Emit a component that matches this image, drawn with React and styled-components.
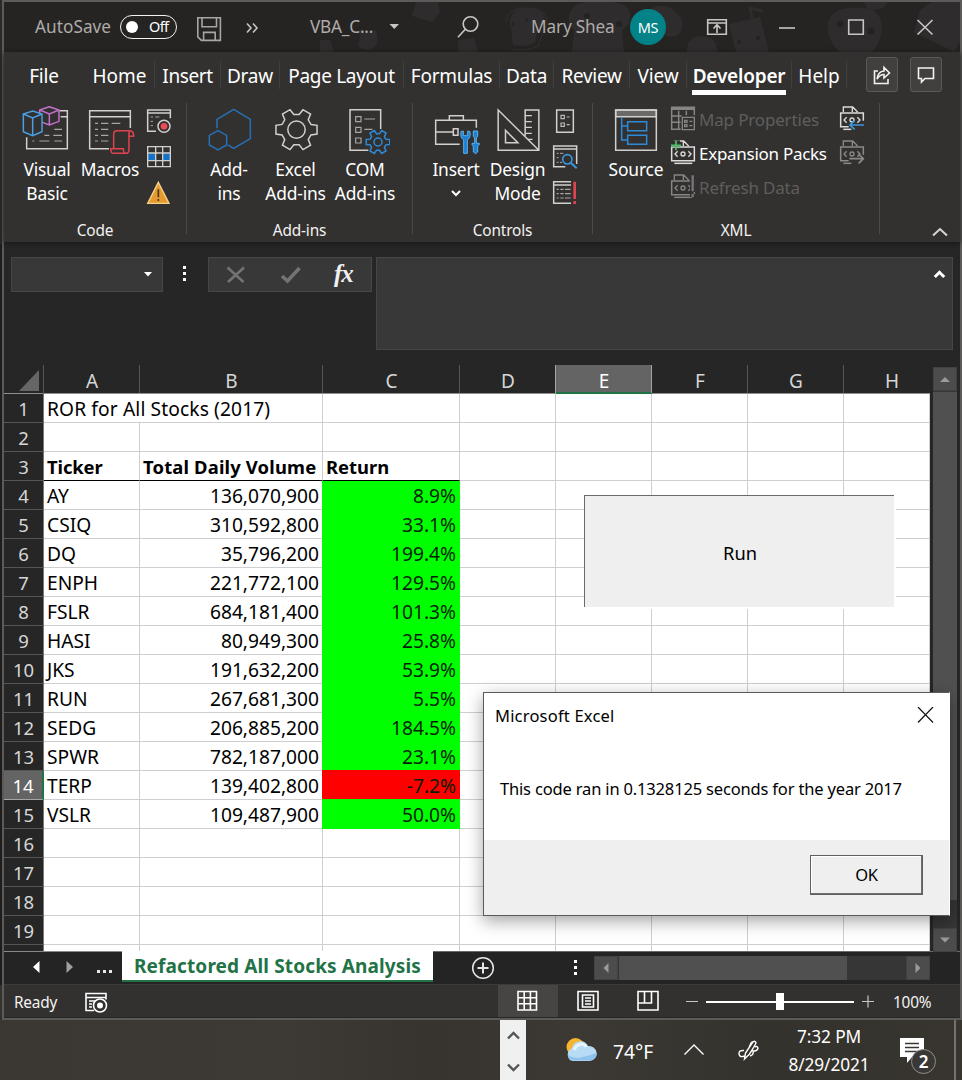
import React from 'react';
import styled, { createGlobalStyle, css } from 'styled-components';

const ui = `'Noto Sans', 'Open Sans', sans-serif`;

const Global = createGlobalStyle`
  * { box-sizing: border-box; }
  body { margin: 0; background: #3a3733; font-family: ${ui}; overflow: hidden; }
  svg { display: block; flex: none; }
`;

const Desktop = styled.div`
  width: 962px;
  height: 1080px;
  display: flex;
  flex-direction: column;
  background: #3a3733;
`;
const Upper = styled.div`
  display: flex;
  height: 1020px;
`;
const BackEdge = styled.div`
  width: 2px;
  background: linear-gradient(#2a2a2a 0 244px, #1d1d1d 244px 985px, #34322f 985px);
`;
const Window = styled.div`
  position: relative;
  width: 960px;
  height: 1020px;
  border: 2px solid #5c5b59;
  background: #262626;
  display: flex;
  flex-direction: column;
`;

/* ---------- icons ---------- */
const Drawing = styled.svg`
  fill: none;
  stroke: ${(p) => p.$c || '#d2d0ce'};
  stroke-width: ${(p) => p.$sw || 4.5};
`;
const Icon = ({ w, h, vb, c, sw, children }) => (
  <Drawing width={w} height={h} viewBox={vb} $c={c} $sw={sw}>{children}</Drawing>
);

const gear = (cx, cy, ro, ri, rot = 0) => {
  const pts = [];
  for (let i = 0; i < 6; i++) {
    const a = i * 60 + rot;
    [[-20, ri], [-12, ro], [12, ro], [20, ri]].forEach(([d, r]) => {
      const t = ((a + d) * Math.PI) / 180;
      pts.push(`${(cx + r * Math.cos(t)).toFixed(1)} ${(cy + r * Math.sin(t)).toFixed(1)}`);
    });
  }
  return `M${pts.join('L')}Z`;
};

const BG = '#323130';
const BLUE = '#2f8ad6';

const BigIcon = ({ x, children }) => <Icon w={50} h={49} vb={`${x} 33 150 147`}>{children}</Icon>;

const VbIcon = () => (
  <BigIcon x={66}>
    <path d="M178 47h24v114H80v-34M182 65h20" />
    <path d="M163 103h23M133 121h15M160 121h26M97 138h6M118 138h30M163 138h23" stroke="#a8a6a4" strokeWidth="3.5" />
    <path d="M148 35l29 10v34l-29 11-29-11V45zM119 45l29 12 29-12M148 57v33" stroke="#c46fc9" />
    <path d="M98 48l28 9v53l-28 12-28-12V57z" fill={BG} stroke="#4a9fe0" />
    <path d="M70 57l28 12 28-12M98 69v53" stroke="#4a9fe0" />
  </BigIcon>
);
const MacrosIcon = () => (
  <BigIcon x={255}>
    <path d="M327 161h-58V47h122v52M269 65h122" />
    <path d="M285 85h9M303 85h22M335 85h26M285 103h9M303 103h22M285 121h9M303 121h22M285 138h9M303 138h22" stroke="#a8a6a4" strokeWidth="3.5" />
    <path d="M341 160v-42q0-11 10-11h38q12 0 12 17h-14M387 124v-8q0-9 5-9M387 124v40q0 11-10 11h-36q-9 0-9-14h38q0 14 8 14" stroke="#e04350" />
  </BigIcon>
);
const AddinsIcon = () => (
  <BigIcon x={612}>
    <g stroke="#2870b4">
      <path d="M651 100V73l50-30 50 30v58l-50 29-17-10" />
      <path d="M654 107l26 14v29l-26 15-26-15v-29z" />
    </g>
  </BigIcon>
);
const GearIcon = () => (
  <BigIcon x={811.5}>
    <path d={gear(888, 104, 63, 46)} />
    <circle cx="888" cy="104" r="26" />
  </BigIcon>
);
const ComIcon = () => (
  <BigIcon x={60}>
    <path d="M145 166H90V44h92v58" />
    <g strokeWidth="3.5">
      <path d="M107 65h16v15h-16zM107 97h16v15h-16zM107 129h16v15h-16zM133 72h32M133 103h24" stroke="#a8a6a4" />
    </g>
    <path d={gear(174, 141, 36, 25)} stroke={BLUE} />
    <circle cx="174" cy="141" r="12" stroke={BLUE} />
  </BigIcon>
);
const ToolboxIcon = () => (
  <BigIcon x={333}>
    <path d="M388 74V62h42v12M419 148h-72V76h122v22M347 111h52M400 101h14v20h-14z" />
    <path d="M423 110q-3 18 8 24v41h11v-41q11-6 8-24l-7-2v14h-13v-14z" fill="#1f7fd0" stroke="#5cb0ee" strokeWidth="3" />
    <path d="M460 108h13v16l-4 5v16h9v4l-5 4v18l-6 5-7-5v-18l-4-4v-4h8v-16l-4-5z" fill="#1f7fd0" stroke="#5cb0ee" strokeWidth="3" />
  </BigIcon>
);
const DesignIcon = () => (
  <BigIcon x={517.5}>
    <path d="M614 122V45h41v121H533V45l122 121M555 106v37h37z" />
    <path d="M614 62h20M614 80h20M614 97h20M614 115h20M622 133h14" strokeWidth="3.5" />
  </BigIcon>
);
const SourceIcon = () => (
  <BigIcon x={873}>
    <path d="M887 45h122v20H887z" fill="#6a6967" />
    <path d="M887 45h122v121H887z" />
    <path d="M905 66v69h18M905 93h18M923 80h57v27h-57zM923 121h57v27h-57z" stroke={BLUE} />
  </BigIcon>
);

const SmallIcon = ({ x, y, children }) => <Icon w={28} h={30} vb={`${x} ${y} 84 90`}>{children}</Icon>;

const RecordIcon = () => (
  <SmallIcon x={435} y={30}>
    <path d="M468 109h-25V45h68v25M443 54h68" />
    <path d="M452 66h7M466 66h12M452 79h7M452 92h7" stroke="#a8a6a4" strokeWidth="3" />
    <circle cx="492" cy="94" r="18" />
    <circle cx="492" cy="94" r="10" fill="#ee4b55" stroke="none" />
  </SmallIcon>
);
const RelativeIcon = () => (
  <SmallIcon x={435} y={138}>
    <path d="M443 175h24v22h-24zM488 175h23v22h-23z" fill="#1272c8" stroke="none" />
    <path d="M443 155h68v60h-68zM443 174h68M443 197h68M467 155v60M488 155v60" strokeWidth="4" />
  </SmallIcon>
);
const WarningIcon = () => (
  <SmallIcon x={435} y={246}>
    <path d="M475 262l32 63h-64z" fill="#e49a2c" stroke="#f7d08a" strokeWidth="4" />
    <path d="M475 283v24M475 312v6" stroke="#4a3a20" strokeWidth="5" />
  </SmallIcon>
);
const PropsIcon = () => (
  <SmallIcon x={693} y={30}>
    <path d="M710 45h50v67h-50z" />
    <path d="M723 61h10v10h-10zM723 84h10v10h-10zM740 66h9M740 89h9" strokeWidth="3.5" stroke="#bbb" />
  </SmallIcon>
);
const CodeIcon = () => (
  <SmallIcon x={693} y={138}>
    <path d="M736 215h-35v-62h69v54M701 162h69" />
    <path d="M710 175h6M720 175h10M710 188h6M710 202h6M720 202h6" stroke="#a8a6a4" strokeWidth="3" />
    <circle cx="742" cy="193" r="14" stroke="#3d97dd" strokeWidth="5" />
    <path d="M752 203l18 17" stroke="#3d97dd" strokeWidth="6" />
  </SmallIcon>
);
const RunDialogIcon = () => (
  <SmallIcon x={693} y={246}>
    <path d="M753 260h-52v65h52M701 270h52" />
    <path d="M710 283h6M721 283h10M735 283h17M710 296h6M721 296h10M735 296h17M710 309h6M721 309h10M735 309h17" stroke="#a8a6a4" strokeWidth="3.5" />
    <path d="M764 260v52M764 318v9" stroke="#e04350" strokeWidth="8" />
  </SmallIcon>
);

const XmlPage = ({ x, y, full = true }) => (
  <g transform={`translate(${x} ${y})`}>
    <path d="M10 18V3h28l15 15M37 3v15" strokeWidth="4" />
    <path d={full ? 'M2 21h68v41H2z' : 'M70 44V21H2v41h24'} />
    <path d="M20 34l-8 8 8 8M52 34l8 8-8 8" strokeWidth="4" />
    <circle cx="36" cy="42" r="6" strokeWidth="4" />
    <path d={full ? 'M10 70h54' : 'M10 70h24'} />
  </g>
);
const RowIcon = ({ x, y, c, children }) => <Icon w={26} h={28} vb={`${x} ${y} 78 84`} c={c}>{children}</Icon>;

const MapIcon = () => (
  <RowIcon x={90} y={30} c="#868583">
    <path d="M93 36h72v9H93z" fill="#868583" stroke="none" />
    <path d="M122 103H95V37h68v24M95 63h30M95 82h27M116 47v56M139 47v14" />
    <path d="M127 67h36v37h-36zM134 76h7v6h-7zM134 89h7v6h-7zM148 79h9M148 92h9" strokeWidth="4" />
  </RowIcon>
);
const PacksIcon = () => (
  <RowIcon x={90} y={132} c="#dedcda">
    <XmlPage x={93} y={135} />
    <path d="M92 136h28v18H92z" fill={BG} stroke="none" />
    <path d="M108 137v29M93 151h30" stroke="#4cc46a" strokeWidth="5" />
  </RowIcon>
);
const RefreshIcon = () => (
  <RowIcon x={90} y={234} c="#868583">
    <XmlPage x={93} y={237} />
    <path d="M158 236v56M158 297v10" stroke={BG} strokeWidth="16" />
    <path d="M158 241v48M158 297v9" stroke="#777" strokeWidth="7" />
  </RowIcon>
);
const ImportIcon = () => (
  <RowIcon x={597} y={30} c="#dedcda">
    <XmlPage x={600} y={33} full={false} />
    <path d="M672 90h-40M644 77l-14 13 14 13" stroke="#3d97dd" strokeWidth="5" />
  </RowIcon>
);
const ExportIcon = () => (
  <RowIcon x={597} y={132} c="#8a8987">
    <XmlPage x={600} y={135} full={false} />
    <path d="M628 191h40M656 177l14 14-14 14" strokeWidth="5" />
  </RowIcon>
);

/* ---------- title bar ---------- */
const TitleBar = styled.div`
  position: relative;
  isolation: isolate;
  height: 50px;
  flex: none;
  background: #252423;
  display: grid;
  grid-template-columns: 31px 85px 75px 50px 65px 77px 68px 76px 99px 75px 72px 69px 69px 45px;
  align-items: center;
`;
const Doodles = styled.svg`
  position: absolute;
  left: 0;
  top: 0;
  z-index: -1;
  fill: #2e2c2d;
  stroke: none;
`;
const TitleText = styled.span`
  font-size: 17.2px;
  line-height: 50px;
  color: #aeaba8;
  white-space: nowrap;
  letter-spacing: ${(p) => p.$ls || 0}px;
`;
const Toggle = styled.span`
  width: 57px;
  height: 24px;
  border: 1.5px solid #f3f2f1;
  border-radius: 12px;
  display: flex;
  align-items: center;
  gap: 11px;
  padding: 0 0 2px 5px;
  font-size: 14.5px;
  letter-spacing: -0.6px;
  color: #fff;
  &::before {
    content: '';
    width: 12px;
    height: 12px;
    margin-top: 1px;
    border-radius: 50%;
    background: #fff;
  }
`;
const Avatar = styled.span`
  width: 36px;
  height: 36px;
  border-radius: 50%;
  background: #038387;
  color: #fff;
  font-size: 14.5px;
  letter-spacing: -0.3px;
  display: flex;
  align-items: center;
  justify-content: center;
`;
const TitleIcon = ({ x, w, children, c = '#c8c6c4' }) => (
  <Icon w={w} h={50} vb={`${x} 2 ${w} 50`} c={c} sw={1.6}>{children}</Icon>
);

const Title = () => (
  <TitleBar>
    <Doodles width="956" height="50" viewBox="4 2 956 50">
      <path d="M416 2h22l2 10-8 10-20-6zM360 36q-4-8 6-6l2 2 8-2q4 14-2 18-10 4-16-2zM458 40l16-2 4 14h-20zM320 40h10l4 12h-14z" />
      <path d="M516 10q22-6 27 4 4 12-5 16l-3 12q-10 6-22 3l-2-18q-4-8 5-17z" />
      <path d="M506 22q2-15 22-14 20 0 19 17l-5 10-4 11q-14 6-27 3" fill="none" stroke="#2e2c2d" strokeWidth="1.5" />
      <path d="M570 12q4-12 28-10 28-2 32 10 2 12-8 18l2 22h-52l2-22q-8-8-4-18zM652 8q18-8 30 12 2 12-6 16-14 4-20-12zM729 24l31-7 9 35h-33z" />
      <path d="M688 44q3-8 14-8 14 0 16 16h-32zM828 22q6-16 28-14 24-2 26 18 0 16-10 26h-32q-14-12-12-30zM864 2h24q-4 8-16 8-6-2-8-8zM920 10l12-8h28v40l-6 10-40-20z" />
      <path d="M752 18l-2-10 13 3" stroke="#2e2c2d" strokeWidth="3" fill="none" />
      <g fill="#242223">
        <circle cx="840" cy="24" r="3.5" /><circle cx="871" cy="31" r="3.5" /><circle cx="587" cy="16" r="3" /><circle cx="619" cy="24" r="3" /><circle cx="739" cy="42" r="2" /><circle cx="758" cy="38" r="2" /><circle cx="513" cy="24" r="1.5" /><circle cx="527" cy="20" r="1.5" />
      </g>
    </Doodles>
    <span />
    <TitleText $ls={0.05}>AutoSave</TitleText>
    <Toggle>Off</Toggle>
    <TitleIcon x={195} w={30} c="#a8a6a3">
      <path d="M197.8 17.8h22.6v22.6h-19l-3.6-3.6zM202 18v8.7h14.5V18M203.6 40.4v-8h11.6v8" />
    </TitleIcon>
    <TitleIcon x={245} w={20}><path d="M247 23.5l4 4.5-4 4.5M253 23.5l4 4.5-4 4.5" /></TitleIcon>
    <TitleText $ls={-0.2}>VBA_C...</TitleText>
    <TitleIcon x={387} w={16}><path d="M389.5 24h9.5l-4.7 5z" fill="#c8c6c4" stroke="none" /></TitleIcon>
    <TitleIcon x={455} w={28}><circle cx="470.500" cy="24" r="7.3" /><path d="M465.3 29.2L458 37.2" /></TitleIcon>
    <TitleText $ls={-0.15}>Mary Shea</TitleText>
    <Avatar>MS</Avatar>
    <TitleIcon x={705} w={26}><path d="M707.7 19.7h18.6v14.6h-18.6zM707.7 23h18.6M717 33v-8M713.5 28.5l3.5-3.8 3.5 3.8" /></TitleIcon>
    <TitleIcon x={777} w={22}><path d="M779 28h16" /></TitleIcon>
    <TitleIcon x={846} w={22}><path d="M848.7 20h14.6v14.3h-14.6z" /></TitleIcon>
    <TitleIcon x={915} w={22}><path d="M917.5 20l15 14.5M932.5 20l-15 14.5" /></TitleIcon>
  </TitleBar>
);

/* ---------- ribbon ---------- */
const Ribbon = styled.div`
  height: 190px;
  flex: none;
  background: ${BG};
  box-shadow: 0 1px 5px #161616;
  position: relative;
`;
const Tabs = styled.div`
  display: flex;
  height: 49px;
`;
const Tab = styled.div`
  width: ${(p) => p.$w}px;
  height: 28px;
  margin-top: 9px;
  border-right: 1px solid ${(p) => (p.$plain ? 'transparent' : '#403f3e')};
  color: #fff;
  font-size: 19px;
  line-height: 31px;
  letter-spacing: ${(p) => p.$ls || 0}px;
  text-align: center;
  white-space: nowrap;
  ${(p) => p.$active && css`
    font-weight: 600;
    &::after {
      content: '';
      display: block;
      height: 5px;
      margin: -2px 5px 0 5px;
      background: #fff;
    }
  `}
`;
const TabButton = styled.span`
  width: 32px;
  height: 35px;
  margin: 5px 0 0 ${(p) => p.$ml}px;
  border: 1px solid #5a5958;
  border-radius: 3px;
  background: #41403f;
  display: flex;
  align-items: center;
  justify-content: center;
`;
const Groups = styled.div`
  display: flex;
  height: 138px;
  padding-top: 2px;
`;
const Group = styled.div`
  width: ${(p) => p.$w}px;
  height: 131px;
  border-right: 1px solid #4a4948;
  display: flex;
  flex-direction: column;
`;
const GroupBody = styled.div`
  height: 118px;
  padding-left: ${(p) => p.$pl}px;
  padding-top: 3px;
  display: flex;
`;
const GroupLabel = styled.div`
  color: #f3f2f1;
  font-size: 15.4px;
  line-height: 20px;
  height: 13px;
  letter-spacing: -0.15px;
  text-align: center;
`;
const BigButton = styled.div`
  width: ${(p) => p.$w}px;
  display: flex;
  flex-direction: column;
  align-items: center;
  color: #fff;
  font-size: 17.4px;
  line-height: 24px;
  letter-spacing: -0.17px;
  text-align: center;
  white-space: nowrap;
  & > span { margin-top: 2px; }
`;
const SmallColumn = styled.div`
  display: flex;
  flex-direction: column;
  gap: 6px;
  margin-top: -1px;
  margin-left: ${(p) => p.$ml || 0}px;
`;
const XmlList = styled.div`
  display: flex;
  flex-direction: column;
  gap: 6px;
  width: 169px;
  margin-left: 7px;
  margin-top: -1px;
`;
const XmlItem = styled.div`
  display: flex;
  align-items: center;
  gap: 3px;
  height: 28px;
  font-size: 17px;
  letter-spacing: ${(p) => (p.$off ? -0.17 : -0.28)}px;
  white-space: nowrap;
  color: ${(p) => (p.$off ? '#5f5e5d' : '#fff')};
`;
const Collapse = styled.div`
  margin: 124px 0 0 51px;
`;

const tabs = [
  ['File', 81, true, -0.2], ['Home', 70, false, 0], ['Insert', 66, false, -0.4], ['Draw', 59, false, -0.2],
  ['Page Layout', 124, false, -0.3], ['Formulas', 96, false, -0.25], ['Data', 54, false, -0.2],
  ['Review', 76, false, -0.3], ['View', 57, false, -0.2],
];

const RibbonBar = () => (
  <Ribbon>
    <Tabs>
      {tabs.map(([t, w, plain, ls]) => <Tab key={t} $w={w} $plain={plain} $ls={ls}>{t}</Tab>)}
      <Tab $w={105} $active $ls={-0.2}>Developer</Tab>
      <Tab $w={55}>Help</Tab>
      <TabButton $ml={19}>
        <Icon w={20} h={20} vb="0 0 20 20" sw={1.6} c="#f3f2f1">
          <path d="M6 6H2.500v12.500H16V14M5 14q1-7.500 7-8V2.500L17.500 8 12 13V9.500q-4 0-7 4.500z" />
        </Icon>
      </TabButton>
      <TabButton $ml={12}>
        <Icon w={20} h={20} vb="0 0 20 20" sw={1.6} c="#f3f2f1">
          <path d="M2.500 3h15v10.500H9L5.500 17v-3.500h-3z" />
        </Icon>
      </TabButton>
    </Tabs>
    <Groups>
      <Group $w={183}>
        <GroupBody $pl={15}>
          <BigButton $w={56}><VbIcon /><span>Visual<br />Basic</span></BigButton>
          <BigButton $w={70}><MacrosIcon /><span>Macros</span></BigButton>
          <SmallColumn><RecordIcon /><RelativeIcon /><WarningIcon /></SmallColumn>
        </GroupBody>
        <GroupLabel>Code</GroupLabel>
      </Group>
      <Group $w={226}>
        <GroupBody $pl={12}>
          <BigButton $w={60}><AddinsIcon /><span>Add-<br />ins</span></BigButton>
          <BigButton $w={73}><GearIcon /><span>Excel<br />Add-ins</span></BigButton>
          <BigButton $w={66}><ComIcon /><span>COM<br />Add-ins</span></BigButton>
        </GroupBody>
        <GroupLabel>Add-ins</GroupLabel>
      </Group>
      <Group $w={180}>
        <GroupBody $pl={12}>
          <BigButton $w={62}>
            <ToolboxIcon /><span>Insert</span>
            <Icon w={12} h={24} vb="0 -1 12 24" sw={2} c="#fff"><path d="M2 9l4 4 4-4" /></Icon>
          </BigButton>
          <BigButton $w={61}><DesignIcon /><span>Design<br />Mode</span></BigButton>
          <SmallColumn $ml={3}><PropsIcon /><CodeIcon /><RunDialogIcon /></SmallColumn>
        </GroupBody>
        <GroupLabel>Controls</GroupLabel>
      </Group>
      <Group $w={287}>
        <GroupBody $pl={16}>
          <BigButton $w={54}><SourceIcon /><span>Source</span></BigButton>
          <XmlList>
            <XmlItem $off><MapIcon />Map Properties</XmlItem>
            <XmlItem><PacksIcon />Expansion Packs</XmlItem>
            <XmlItem $off><RefreshIcon />Refresh Data</XmlItem>
          </XmlList>
          <SmallColumn><ImportIcon /><ExportIcon /></SmallColumn>
        </GroupBody>
        <GroupLabel>XML</GroupLabel>
      </Group>
      <Collapse><Icon w={18} h={10} vb="0 0 18 10" sw={2} c="#d8d6d4"><path d="M2 8.500l7-6.500 7 6.500" /></Icon></Collapse>
    </Groups>
  </Ribbon>
);

/* ---------- formula bar ---------- */
const FormulaRow = styled.div`
  height: 123px;
  flex: none;
  padding: 15px 7px 0 7px;
  display: flex;
  align-items: flex-start;
`;
const Field = styled.div`
  width: ${(p) => p.$w}px;
  height: ${(p) => p.$h}px;
  margin-left: ${(p) => p.$ml || 0}px;
  background: #383838;
  border: 1px solid #464646;
  display: flex;
  justify-content: flex-end;
  align-items: flex-start;
`;
const FxField = styled(Field)`
  justify-content: flex-start;
`;
const Dots = styled.div`
  width: 45px;
  height: 35px;
  display: flex;
  flex-direction: column;
  align-items: center;
  justify-content: center;
  gap: 3px;
  padding: 0 3px 2px 0;
  & > i { width: 3px; height: 3px; background: #fff; }
`;
const Fx = styled.span`
  font: italic bold 25px/32px 'Liberation Serif', serif;
  letter-spacing: -1px;
  color: #f0f0f0;
  margin-left: 30px;
`;

const Formula = () => (
  <FormulaRow>
    <Field $w={152} $h={35}>
      <Icon w={22} h={33} vb="-1 0 22 33"><path d="M3 14h8l-4 4.500z" fill="#fff" stroke="none" /></Icon>
    </Field>
    <Dots><i /><i /><i /></Dots>
    <FxField $w={164} $h={35}>
      <Icon w={95} h={33} vb="0 0 95 33" c="#737373" sw={2.6}>
        <path d="M18.500 9.500l16 14.500M35 9.500l-16 14.500" />
        <path d="M73 18l5.500 5 12-13" strokeWidth="3.6" />
      </Icon>
      <Fx>fx</Fx>
    </FxField>
    <Field $w={577} $h={93} $ml={4}>
      <Icon w={20} h={33} vb="-1 0 20 33" c="#fff" sw={3}><path d="M1.800 19l4.700-4.700 4.700 4.700" /></Icon>
    </Field>
  </FormulaRow>
);

/* ---------- sheet ---------- */
const SheetArea = styled.div`
  position: relative;
  display: flex;
  height: 586px;
  flex: none;
`;
const Grid = styled.div`
  width: 926px;
  height: 586px;
  overflow: hidden;
`;
const columns = '40px 96px 183px 137px 96px 96px 96px 96px 86px';
const HeaderRow = styled.div`
  display: grid;
  grid-template-columns: ${columns};
  height: 29px;
  border-bottom: 1px solid #8f8f8f;
`;
const ColHead = styled.div`
  height: ${(p) => (p.$on ? 29 : 28)}px;
  border-right: 1px solid ${(p) => (p.$on ? '#a5a5a5' : '#555')};
  color: ${(p) => (p.$on ? '#fff' : '#d6d6d6')};
  font-size: 19px;
  line-height: 32px;
  text-align: center;
  padding-left: 1px;
  ${(p) => p.$on && css`
    background: #646464;
    border-bottom: 2px solid #217346;
    box-shadow: -1px 0 #a5a5a5;
  `}
  &:last-child { padding-left: 10px; border-right: 0; }
`;
const Corner = styled.div`
  display: flex;
  justify-content: flex-end;
  padding: 5px 3px 0 0;
  border-right: 1px solid #555;
`;
const Row = styled.div`
  display: grid;
  grid-template-columns: ${columns};
  grid-template-rows: 29px;
  height: 29px;
`;
const RowHead = styled.div`
  background: ${(p) => (p.$on ? '#646464' : '#262626')};
  color: ${(p) => (p.$on ? '#fff' : '#d6d6d6')};
  border-right: ${(p) => (p.$on ? '2px solid #217346' : '1px solid #777')};
  border-bottom: 1px solid ${(p) => (p.$on ? '#a5a5a5' : '#555')};
  font-size: 18.5px;
  line-height: 30px;
  text-align: center;
`;
const Cell = styled.div`
  grid-column: span ${(p) => p.$span || 1};
  background: #fff;
  color: #000;
  border-right: 1px solid #cfcfcf;
  border-bottom: 1px solid ${(p) => (p.$rule ? '#000' : '#cfcfcf')};
  font-size: ${(p) => (p.$bold ? 18.4 : 19.2)}px;
  line-height: 29px;
  font-weight: ${(p) => (p.$bold ? 700 : 400)};
  text-align: ${(p) => (p.$right ? 'right' : 'left')};
  letter-spacing: ${(p) => p.$ls || 0}px;
  padding: 0 3px;
  white-space: nowrap;
`;
const Filled = styled(Cell)`
  background: ${(p) => p.$fill};
  border-color: ${(p) => p.$fill};
  color: #041f04;
  margin: ${(p) => (p.$first ? 0 : -1)}px 0 0 -1px;
  line-height: ${(p) => (p.$first ? 29 : 31)}px;
  z-index: 1;
`;

const data = [
  ['AY', '136,070,900', '8.9%'], ['CSIQ', '310,592,800', '33.1%'], ['DQ', '35,796,200', '199.4%'],
  ['ENPH', '221,772,100', '129.5%'], ['FSLR', '684,181,400', '101.3%'], ['HASI', '80,949,300', '25.8%'],
  ['JKS', '191,632,200', '53.9%'], ['RUN', '267,681,300', '5.5%'], ['SEDG', '206,885,200', '184.5%'],
  ['SPWR', '782,187,000', '23.1%'], ['TERP', '139,402,800', '-7.2%'], ['VSLR', '109,487,900', '50.0%'],
];
const Blanks = ({ n }) => Array.from({ length: n }, (_, i) => <Cell key={i} />);

const RunButton = styled.button`
  position: absolute;
  left: 580px;
  top: 130px;
  width: 312px;
  height: 114px;
  padding: 2px 0 0 2px;
  background: #efefef;
  border: 0 solid #fff;
  border-width: 0 2px 2px 0;
  box-shadow: inset 1px 1px #6b6b6b;
  font: 18.3px ${ui};
  color: #000;
`;
const VScroll = styled.div`
  width: 24px;
  margin-left: 3px;
  height: 587px;
  display: flex;
  flex-direction: column;
  padding-top: 2px;
`;
const ScrollButton = styled.div`
  width: 24px;
  height: 24px;
  flex: none;
  background: #4c4c4c;
  border: 1px solid #424242;
  display: flex;
  align-items: center;
  justify-content: center;
`;
const VTrack = styled.div`
  flex: 1;
  background: #363636;
  padding-top: 1px;
`;
const VThumb = styled.div`
  height: 508px;
  background: #505050;
`;
const Tri = ({ d }) => <Icon w={12} h={12} vb="0 0 12 12"><path d={d} fill="#9a9a9a" stroke="none" /></Icon>;

const Sheet = () => (
  <SheetArea>
    <Grid>
      <HeaderRow>
        <Corner><Icon w={22} h={22} vb="0 0 22 22"><path d="M21 0v21H1z" fill="#666" stroke="none" /></Icon></Corner>
        {'ABCDEFGH'.split('').map((c) => <ColHead key={c} $on={c === 'E'}>{c}</ColHead>)}
      </HeaderRow>
      <Row>
        <RowHead>1</RowHead>
        <Cell $span={2} $ls={0.12}>ROR for All Stocks (2017)</Cell>
        <Blanks n={6} />
      </Row>
      <Row><RowHead>2</RowHead><Blanks n={8} /></Row>
      <Row>
        <RowHead>3</RowHead>
        <Cell $bold $rule $ls={-0.1}>Ticker</Cell>
        <Cell $bold $rule $ls={0.17}>Total Daily Volume</Cell>
        <Cell $bold $rule>Return</Cell>
        <Blanks n={5} />
      </Row>
      {data.map(([t, v, r], i) => (
        <Row key={t}>
          <RowHead $on={i === 10}>{i + 4}</RowHead>
          <Cell>{t}</Cell>
          <Cell $right>{v}</Cell>
          <Filled $right $first={i === 0} $fill={r[0] === '-' ? '#ff0000' : '#00ff00'}>{r}</Filled>
          <Blanks n={5} />
        </Row>
      ))}
      {[16, 17, 18, 19, ''].map((n) => <Row key={n}><RowHead>{n}</RowHead><Blanks n={8} /></Row>)}
    </Grid>
    <VScroll>
      <ScrollButton><Tri d="M1 9h10L6 4z" /></ScrollButton>
      <VTrack><VThumb /></VTrack>
      <ScrollButton><Tri d="M1 3.500h10l-5 5z" /></ScrollButton>
    </VScroll>
    <RunButton>Run</RunButton>
  </SheetArea>
);

/* ---------- sheet tabs and status ---------- */
const SheetTabs = styled.div`
  height: 34px;
  flex: none;
  display: flex;
  background: #242424;
  border-bottom: 1px solid #3a3a3a;
`;
const Nav = styled.div`
  width: 118px;
  border-top: 1px solid #8a8a8a;
`;
const SheetTab = styled.div`
  width: 311px;
  height: 31px;
  background: #fff;
  border-bottom: 2px solid #217346;
  color: #217346;
  font-weight: 700;
  font-size: 19px;
  line-height: 31px;
  letter-spacing: 0.13px;
  text-align: center;
  white-space: nowrap;
`;
const TabsRest = styled.div`
  flex: 1;
  display: flex;
  border-top: 1px solid #6a6a6a;
`;
const HScroll = styled.div`
  display: flex;
  width: 336px;
  height: 24px;
  margin-top: 4px;
  background: #363636;
  gap: 1px;
`;
const HThumb = styled.div`
  width: 228px;
  background: #505050;
  margin-right: auto;
`;
const Status = styled.div`
  height: 32px;
  flex: none;
  background: ${BG};
  display: grid;
  grid-template-columns: 10px 70px 414px 60px 60px 60px 215px 1fr;
  align-items: center;
  color: #f3f2f1;
  font-size: 15.4px;
  letter-spacing: -0.2px;
  & > span { padding-top: 3px; }
`;
const ViewButton = styled.div`
  height: 32px;
  background: ${(p) => (p.$on ? '#464544' : 'transparent')};
  display: flex;
  justify-content: center;
`;

const Bottom = () => (
  <>
    <SheetTabs>
      <Nav>
        <Icon w={118} h={32} vb="4 952 118 32">
          <path d="M39.500 961v12l-6.500-6z" fill="#fff" stroke="none" />
          <path d="M66.500 961v12l6.500-6z" fill="#a0a0a0" stroke="none" />
          <path d="M97 970h3v3h-3zM103 970h3v3h-3zM109 970h3v3h-3z" fill="#e8e8e8" stroke="none" />
        </Icon>
      </Nav>
      <SheetTab>Refactored All Stocks Analysis</SheetTab>
      <TabsRest>
        <Icon w={161} h={32} vb="433 952 161 32" c="#e8e8e8" sw={1.5}>
          <circle cx="483" cy="968" r="10.300" />
          <path d="M483 962.500v11M477.500 968h11" strokeWidth="2" />
          <path d="M574 960h3v3h-3zM574 966h3v3h-3zM574 972h3v3h-3z" fill="#fff" stroke="none" />
        </Icon>
        <HScroll>
          <ScrollButton><Tri d="M8.500 1v10l-5-5z" /></ScrollButton>
          <HThumb />
          <ScrollButton><Tri d="M3.500 1v10l5-5z" /></ScrollButton>
        </HScroll>
      </TabsRest>
    </SheetTabs>
    <Status>
      <span />
      <span>Ready</span>
      <Icon w={26} h={32} vb="84 985 26 32" c="#fff" sw={1.6}>
        <path d="M94 1010.500h-8V993.500h20v6M86 997.500h20M89 1001h6M89 1004h3M89 1007h3" />
        <circle cx="100" cy="1005.500" r="6.500" />
        <circle cx="100" cy="1005.500" r="3" fill="#fff" stroke="none" />
      </Icon>
      <ViewButton $on>
        <Icon w={22} h={32} vb="517 985.500 22 32" c="#fff" sw={1.6}>
          <path d="M518 992h18.500v18.500H518zM518 998.200h18.500M518 1004.300h18.500M524.200 992v18.500M530.400 992v18.500" />
        </Icon>
      </ViewButton>
      <ViewButton>
        <Icon w={22} h={32} vb="577 985.500 22 32" c="#fff" sw={1.6}>
          <path d="M578 992h20v18.500h-20zM582.500 995.500h11v12h-11zM585 998.500h6M585 1001.500h6M585 1004.500h6" />
        </Icon>
      </ViewButton>
      <ViewButton>
        <Icon w={22} h={32} vb="637 985.500 22 32" c="#fff" sw={1.6}>
          <path d="M638 992h20v18.500h-20zM638 1003.500h13.500V992M644.500 992v11.500" />
        </Icon>
      </ViewButton>
      <Icon w={205} h={32} vb="678 985.500 205 32" c="#fff" sw={1.2}>
        <path d="M686 1002h12M862 1002h12M868 996v12" stroke="#c8c6c4" />
        <path d="M706 1002.500h148" strokeWidth="2" />
        <path d="M776 993.500h8v17h-8z" fill="#fff" stroke="none" />
      </Icon>
      <span>100%</span>
    </Status>
  </>
);

/* ---------- message box ---------- */
const Dialog = styled.div`
  position: absolute;
  left: 479px;
  top: 690px;
  width: 467px;
  height: 224px;
  background: #fff;
  border: 1px solid #5a5a5a;
  border-right-color: #fff;
  box-shadow: 0 5px 16px rgba(0, 0, 0, 0.36);
  color: #000;
  font-size: 16.5px;
  display: flex;
  flex-direction: column;
  z-index: 3;
`;
const DialogTitle = styled.div`
  height: 44px;
  padding: 0 15px 0 11px;
  display: flex;
  justify-content: space-between;
  align-items: center;
  letter-spacing: 0.2px;
`;
const Message = styled.div`
  flex: 1;
  padding: 40px 0 0 16px;
  line-height: 24px;
  letter-spacing: -0.17px;
  white-space: nowrap;
`;
const DialogFooter = styled.div`
  height: 75px;
  background: #efefef;
  padding: 15px 26px 0 0;
  display: flex;
  justify-content: flex-end;
`;
const OkButton = styled.button`
  width: 113px;
  height: 40px;
  padding: 0 0 2px;
  background: #efefef;
  border: 1px solid #5f5f5f;
  box-shadow: inset -1px -1px #6e6e6e, inset 1px 1px #fff;
  font: 16.5px ${ui};
  letter-spacing: -0.4px;
  color: #000;
`;

const MessageBox = () => (
  <Dialog>
    <DialogTitle>
      <span>Microsoft Excel</span>
      <Icon w={17} h={17} vb="0 0 17 17" c="#111" sw={1.2}><path d="M1 0l15 15.500M16 0L1 15.500" /></Icon>
    </DialogTitle>
    <Message>This code ran in 0.1328125 seconds for the year 2017</Message>
    <DialogFooter><OkButton>OK</OkButton></DialogFooter>
  </Dialog>
);

/* ---------- taskbar ---------- */
const Taskbar = styled.div`
  height: 60px;
  display: grid;
  grid-template-columns: 500px 26px 38px 49px 69px 49px 52px 92px 24px 55px 1fr;
  align-items: center;
  color: #fff;
  background: linear-gradient(90deg, #3b3732, #3d3a36 30%, #37342e 45%, #3c3935 60%, #34322d 80%, #38352f);
`;
const PeekScroll = styled.div`
  height: 60px;
  background: #f0f0f0;
`;
const Temp = styled.span`
  font-size: 19.2px;
  padding-top: 2px;
`;
const Clock = styled.div`
  font-size: 17.3px;
  line-height: 28px;
  padding-top: 1px;
  letter-spacing: -0.1px;
  text-align: center;
`;
const Notifications = styled.div`
  position: relative;
  height: 60px;
`;
const Count = styled.span`
  position: absolute;
  left: 12px;
  top: 29px;
  width: 25px;
  height: 25px;
  border: 1.5px solid #8f8d89;
  border-radius: 50%;
  background: #3a3835;
  font-size: 17px;
  font-weight: 600;
  line-height: 23px;
  text-align: center;
`;
const Peek = styled.div`
  height: 60px;
  border-left: 2px solid #76736e;
`;

const Tray = () => (
  <Taskbar>
    <span />
    <PeekScroll>
      <Icon w={26} h={60} vb="500 1020 26 60" c="#555" sw={2.4}>
        <path d="M508 1038.500l5.500-5.500 5.500 5.500M508 1064.500l5.500 5.500 5.500-5.500" />
      </Icon>
    </PeekScroll>
    <span />
    <Icon w={36} h={60} vb="564 1020 36 60">
      <circle cx="575.500" cy="1047" r="9" fill="#f5b52e" stroke="none" />
      <path d="M573 1061a6.500 6.500 0 0 1-1-12.500 8.500 8.500 0 0 1 16-2.500 7.500 7.500 0 0 1 2 15z" fill="#b9dcf6" stroke="none" />
      <path d="M574 1060.500q-6-1-6-6 5 4 12 3t17-5q0 7-7 8z" fill="#8fc3ee" stroke="none" />
      <path d="M574 1050q2-5 7-6 4 0 5 3" stroke="#e6f4fd" strokeWidth="3" />
    </Icon>
    <Temp>74°F</Temp>
    <Icon w={24} h={60} vb="682 1020 24 60" c="#fff" sw={1.4}><path d="M684.500 1054.500l9.500-9.500 9.500 9.500" /></Icon>
    <Icon w={30} h={60} vb="731 1020 30 60" c="#fff" sw={1.4}>
      <path d="M744.500 1059l1-6 7-10.500q2-2.500 3.500 0 0 1.500-6.500 11.500zM749 1047.500l2-4.500q1.500-2 3-1M744 1050.500q-5.500-.5-5 3.500 .8 4 5.500 2M750 1056q4-1 3-5 4 .5 5-2.500-.500-3-3-1.500" />
    </Icon>
    <Clock>7:32 PM<br />8/29/2021</Clock>
    <span />
    <Notifications>
      <Icon w={44} h={60} vb="899 1020 44 60">
        <path d="M900 1038h24v19h-12l-5 6v-6h-7z" fill="#fff" stroke="none" />
        <path d="M905 1043.500h14M905 1047.500h14M905 1051.500h14" stroke="#3a3835" strokeWidth="1.400" />
      </Icon>
      <Count>2</Count>
    </Notifications>
    <Peek />
  </Taskbar>
);

export default function App() {
  return (
    <Desktop>
      <Global />
      <Upper>
        <BackEdge />
        <Window>
          <Title />
          <RibbonBar />
          <Formula />
          <Sheet />
          <Bottom />
          <MessageBox />
        </Window>
      </Upper>
      <Tray />
    </Desktop>
  );
}
